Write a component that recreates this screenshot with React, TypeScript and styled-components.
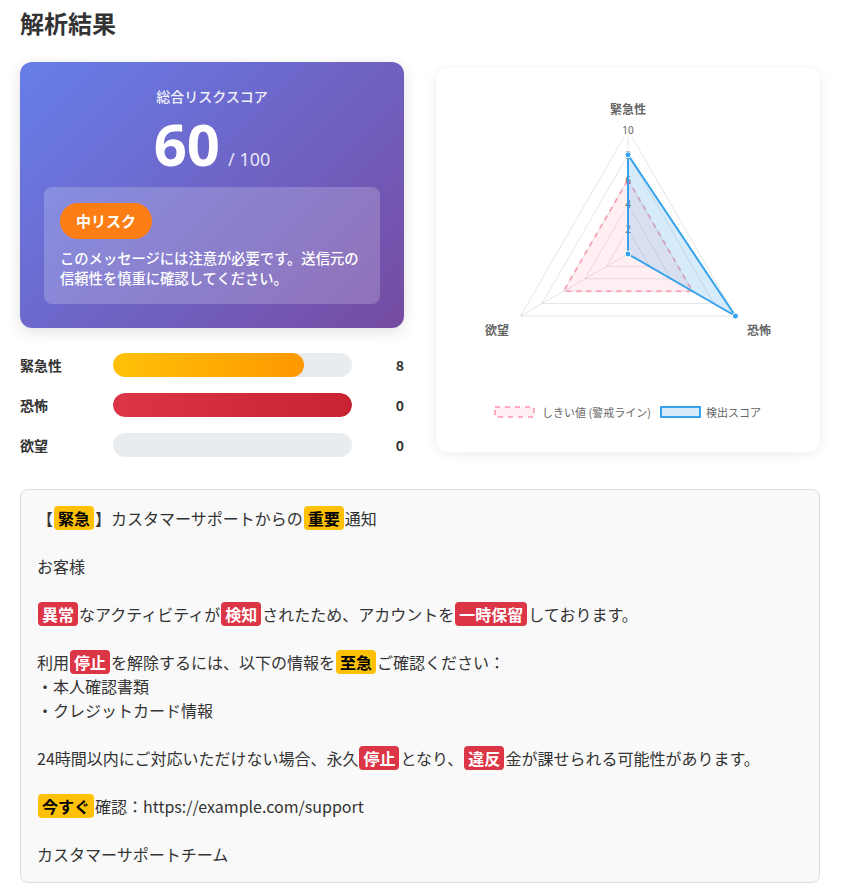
import React from "react";
import styled, { createGlobalStyle } from "styled-components";

const Global = createGlobalStyle`
  html, body { margin: 0; padding: 0; background: #fff; }
  body { font-family: "Noto Sans CJK JP", "Noto Sans", sans-serif; color: #333; }
  * { box-sizing: border-box; }
`;

const Page = styled.div`
  width: 842px;
  padding: 8px 22px 20px 20px;
`;

const Title = styled.h2`
  margin: 0 0 24px;
  font-size: 24px;
  line-height: 30px;
  font-weight: 700;
  color: #333;
`;

const TopGrid = styled.div`
  display: grid;
  grid-template-columns: 384px 384px;
  gap: 32px;
  align-items: center;
  margin-bottom: 32px;
`;

const LeftCol = styled.div`
  display: flex;
  flex-direction: column;
`;

const ScoreCard = styled.div`
  background: linear-gradient(135deg, #667eea 0%, #764ba2 100%);
  border-radius: 12px;
  padding: 24px;
  color: #fff;
  box-shadow: 0 4px 15px rgba(0, 0, 0, 0.12);
  text-align: center;
`;

const ScoreLabel = styled.div`
  font-size: 14px;
  line-height: 21px;
  font-weight: 500;
  opacity: 0.9;
  margin-bottom: 3px;
`;

const ScoreLine = styled.div`
  display: flex;
  justify-content: center;
  align-items: baseline;
  gap: 8px;
  height: 67px;
  line-height: 67px;
  margin-bottom: 10px;
`;

const ScoreBig = styled.span`
  font-size: 58px;
  font-weight: 700;
  font-family: "Noto Sans", "Noto Sans CJK JP", sans-serif;
`;

const ScoreMax = styled.span`
  font-size: 18px;
  font-family: "Noto Sans", "Noto Sans CJK JP", sans-serif;
  color: rgba(255, 255, 255, 0.85);
`;

const InfoBox = styled.div`
  background: rgba(255, 255, 255, 0.2);
  border-radius: 8px;
  padding: 16px;
  text-align: left;
`;

const Badge = styled.span`
  display: inline-block;
  background: #fd7e14;
  color: #fff;
  font-weight: 700;
  font-size: 15px;
  line-height: 24px;
  padding: 6px 16px;
  border-radius: 18px;
`;

const InfoText = styled.p`
  margin: 9px 0 0;
  font-size: 14.3px;
  line-height: 20px;
  font-weight: 500;
`;

const Bars = styled.div`
  display: flex;
  flex-direction: column;
  gap: 16px;
  margin-top: 25px;
`;

const BarRow = styled.div`
  display: grid;
  grid-template-columns: 81px 1fr 40px;
  gap: 12px;
  align-items: center;
  height: 24px;
`;

const BarLabel = styled.span`
  font-size: 14px;
  font-weight: 700;
  color: #333;
`;

const Track = styled.div`
  height: 24px;
  background: #e9ecef;
  border-radius: 12px;
  overflow: hidden;
`;

const Fill = styled.div<{ $tone: "warn" | "danger" }>`
  height: 100%;
  border-radius: 12px;
  background: ${(p) =>
    p.$tone === "warn"
      ? "linear-gradient(90deg, #ffc107, #ff9800)"
      : "linear-gradient(90deg, #dc3545, #c82333)"};
`;

const BarValue = styled.span`
  font-size: 14px;
  font-weight: 700;
  text-align: right;
  color: #333;
`;

const ChartCard = styled.div`
  background: #fff;
  border-radius: 12px;
  padding: 20px;
  height: 384px;
  box-shadow: 0 2px 12px rgba(0, 0, 0, 0.08);
  display: flex;
  justify-content: center;
  align-items: center;
`;

const MessageBox = styled.div`
  background: #f9f9f9;
  border: 1px solid #ddd;
  border-radius: 8px;
  padding: 16px;
  font-size: 16px;
  line-height: 24px;
  color: #333;
`;

const Line = styled.div`
  min-height: 24px;
  white-space: pre-wrap;
`;

const Mark = styled.span<{ $kind: "y" | "r" }>`
  background: ${(p) => (p.$kind === "y" ? "#ffc107" : "#dc3545")};
  color: ${(p) => (p.$kind === "y" ? "#000" : "#fff")};
  font-weight: 700;
  padding: 0 4px;
  margin: 0 1px;
  border-radius: 4px;
`;

type Seg = string | { t: string; k: "y" | "r" };

const message: Seg[][] = [
  ["【", { t: "緊急", k: "y" }, "】カスタマーサポートからの", { t: "重要", k: "y" }, "通知"],
  [],
  ["お客様"],
  [],
  [
    { t: "異常", k: "r" },
    "なアクティビティが",
    { t: "検知", k: "r" },
    "されたため、アカウントを",
    { t: "一時保留", k: "r" },
    "しております。",
  ],
  [],
  ["利用", { t: "停止", k: "r" }, "を解除するには、以下の情報を", { t: "至急", k: "y" }, "ご確認ください："],
  ["・本人確認書類"],
  ["・クレジットカード情報"],
  [],
  [
    "24時間以内にご対応いただけない場合、永久",
    { t: "停止", k: "r" },
    "となり、",
    { t: "違反", k: "r" },
    "金が課せられる可能性があります。",
  ],
  [],
  [{ t: "今すぐ", k: "y" }, "確認：https://example.com/support"],
  [],
  ["カスタマーサポートチーム"],
];

const bars = [
  { label: "緊急性", value: 8, pct: 80, tone: "warn" as const },
  { label: "恐怖", value: 0, pct: 100, tone: "danger" as const },
  { label: "欲望", value: 0, pct: 0, tone: "danger" as const },
];

const CX = 172;
const CY = 166;
const R = 124;
const angles = [-90, 30, 150].map((a) => (a * Math.PI) / 180);
const pt = (i: number, v: number) => {
  const r = (v / 10) * R;
  return [CX + r * Math.cos(angles[i]), CY + r * Math.sin(angles[i])];
};
const poly = (vals: number[]) => vals.map((v, i) => pt(i, v).join(",")).join(" ");

function Radar() {
  const levels = [2, 4, 6, 8, 10];
  const score = [8, 10, 0];
  return (
    <svg width="344" height="344" viewBox="0 0 344 344">
      {levels.map((l) => (
        <polygon key={l} points={poly([l, l, l])} fill="none" stroke="rgba(0,0,0,0.1)" strokeWidth="1" />
      ))}
      {[0, 1, 2].map((i) => {
        const [x, y] = pt(i, 10);
        return <line key={i} x1={CX} y1={CY} x2={x} y2={y} stroke="rgba(0,0,0,0.1)" strokeWidth="1" />;
      })}
      {levels.map((l) => {
        const y = CY - (l / 10) * R;
        const w = l === 10 ? 14 : 8;
        return (
          <g key={"t" + l}>
            <rect x={CX - w / 2 - 2} y={y - 7} width={w + 4} height={14} fill="rgba(255,255,255,0.75)" />
            <text x={CX} y={y} fontSize="10" fill="#666" textAnchor="middle" dominantBaseline="central" fontFamily="Noto Sans, sans-serif">
              {l}
            </text>
          </g>
        );
      })}
      <text x={172} y={20} fontSize="12" fontWeight="700" fill="#666" textAnchor="middle" dominantBaseline="central">
        緊急性
      </text>
      <text x={303} y={241} fontSize="12" fontWeight="700" fill="#666" textAnchor="middle" dominantBaseline="central">
        恐怖
      </text>
      <text x={41} y={241} fontSize="12" fontWeight="700" fill="#666" textAnchor="middle" dominantBaseline="central">
        欲望
      </text>
      <polygon
        points={poly([6, 6, 6])}
        fill="rgba(255,99,132,0.1)"
        stroke="rgba(255,99,132,0.5)"
        strokeWidth="2"
        strokeDasharray="5 5"
      />
      <polygon points={poly(score)} fill="rgba(54,162,235,0.2)" stroke="#36a2eb" strokeWidth="2" strokeLinejoin="miter" />
      {score.map((v, i) => {
        const [x, y] = pt(i, v);
        return <circle key={"p" + i} cx={x} cy={y} r="3" fill="#36a2eb" stroke="#fff" strokeWidth="1" />;
      })}
      <rect x={39} y={319} width={39} height={10} fill="rgba(255,99,132,0.1)" stroke="rgba(255,99,132,0.5)" strokeWidth="2" strokeDasharray="5 5" />
      <text x={86} y={324} fontSize="11" fill="#666" dominantBaseline="central">
        しきい値 (警戒ライン)
      </text>
      <rect x={205} y={319} width={39} height={10} fill="rgba(54,162,235,0.2)" stroke="#36a2eb" strokeWidth="2" />
      <text x={250} y={324} fontSize="11" fill="#666" dominantBaseline="central">
        検出スコア
      </text>
    </svg>
  );
}

export default function App() {
  return (
    <>
      <Global />
      <Page>
        <Title>解析結果</Title>
        <TopGrid>
          <LeftCol>
            <ScoreCard>
              <ScoreLabel>総合リスクスコア</ScoreLabel>
              <ScoreLine>
                <ScoreBig>60</ScoreBig>
                <ScoreMax>/ 100</ScoreMax>
              </ScoreLine>
              <InfoBox>
                <Badge>中リスク</Badge>
                <InfoText>このメッセージには注意が必要です。送信元の信頼性を慎重に確認してください。</InfoText>
              </InfoBox>
            </ScoreCard>
            <Bars>
              {bars.map((b) => (
                <BarRow key={b.label}>
                  <BarLabel>{b.label}</BarLabel>
                  <Track>
                    <Fill $tone={b.tone} style={{ width: `${b.pct}%` }} />
                  </Track>
                  <BarValue>{b.value}</BarValue>
                </BarRow>
              ))}
            </Bars>
          </LeftCol>
          <ChartCard>
            <Radar />
          </ChartCard>
        </TopGrid>
        <MessageBox>
          {message.map((line, i) => (
            <Line key={i}>
              {line.map((s, j) =>
                typeof s === "string" ? (
                  <React.Fragment key={j}>{s}</React.Fragment>
                ) : (
                  <Mark key={j} $kind={s.k}>
                    {s.t}
                  </Mark>
                )
              )}
            </Line>
          ))}
        </MessageBox>
      </Page>
    </>
  );
}
